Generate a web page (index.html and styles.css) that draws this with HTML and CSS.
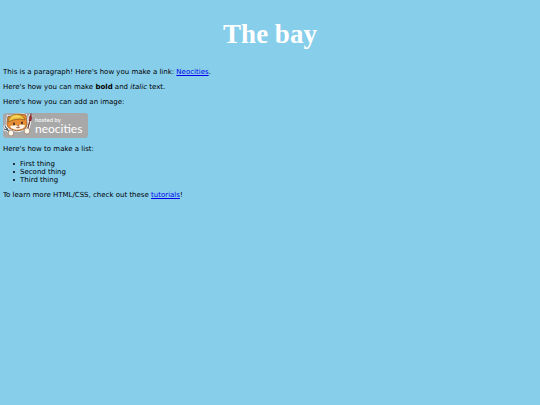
FILE: index.html
```html
<!DOCTYPE html>
<html lang="en">
<head>
<meta charset="utf-8">
<meta name="viewport" content="width=device-width, initial-scale=1">
<title>The bay</title>
<link rel="stylesheet" href="styles.css">
</head>
<body>
<h1>The bay</h1>
<p>This is a paragraph! Here's how you make a link: <a href="#">Neocities</a>.</p>
<p>Here's how you can make <strong>bold</strong> and <em>italic</em> text.</p>
<p>Here's how you can add an image:</p>
<svg class="badge" viewBox="0 0 85 25" role="img" aria-label="hosted by neocities">
  <rect width="85" height="25" rx="3" fill="#a8a8a8"/>
  <!-- fork and paintbrush -->
  <g fill="none" stroke-linecap="round">
    <path d="M2 13 L4 16 L8 22 M5 12 L5 16 M1 16 L4 17" stroke="#fff" stroke-width="2.6"/>
    <path d="M2 13 L4 16 L8 22 M5 12 L5 16 M1 16 L4 17" stroke="#545b62" stroke-width="1.3"/>
    <path d="M27.5 3 L26 10 L24 18" stroke="#fff" stroke-width="3.6"/>
    <path d="M26.5 9 L24 18" stroke="#65372d" stroke-width="1.3"/>
    <path d="M28 1 Q25.5 4 26 8 L28 8 Q29.5 5 28 1Z" fill="#a8242c" stroke="#592b2b" stroke-width=".6"/>
  </g>
  <!-- cat with a yellow helmet -->
  <path d="M4 9 L5 3 L8 4 Q12 0 18 1 L23 2 L24 9 Q25 15 19 17 Q13 19 8 16 Q3 14 4 9Z" fill="#e98d32" stroke="#fff" stroke-width="2"/>
  <path d="M4 9 L5 3 L8 4 Q12 0 18 1 L23 2 L24 9 Q25 15 19 17 Q13 19 8 16 Q3 14 4 9Z" fill="#e98d32" stroke="#754927" stroke-width=".7"/>
  <path d="M7 13 Q10 12 14 12.5 Q19 11 22 12 Q22 15 18 16 Q12 18 8 15Z" fill="#fff4e3"/>
  <path d="M5 9 Q6 2 13 1 Q20 1 22 7 L17 6 Q11 6 5 9Z" fill="#efc13c" stroke="#85551f" stroke-width=".7"/>
  <path d="M9 5 Q12 2 17 4" fill="none" stroke="#ffe88a" stroke-width=".8"/>
  <ellipse cx="11" cy="11" rx=".9" ry="1.4" fill="#352b2a"/>
  <ellipse cx="19" cy="10" rx=".9" ry="1.4" fill="#352b2a"/>
  <path d="M14.5 12.5 L16 12.5 L15.2 13.5Z M13 14.5 Q15 15.5 17 14" fill="#b06043" stroke="#82472e" stroke-width=".6"/>
  <ellipse cx="8" cy="20" rx="2.8" ry="3" fill="#fff7e8" stroke="#8c705c" stroke-width=".7"/>
  <ellipse cx="24" cy="18" rx="2.9" ry="3.1" fill="#fff7e8" stroke="#8c705c" stroke-width=".7"/>
  <text class="badge-hosted" x="32" y="9">hosted by</text>
  <text class="badge-name" x="32" y="20">neocities</text>
</svg>
<p>Here's how to make a list:</p>
<ul>
<li>First thing</li>
<li>Second thing</li>
<li>Third thing</li>
</ul>
<p>To learn more HTML/CSS, check out these <a href="#">tutorials</a>!</p>
</body>
</html>
```

FILE: styles.css
```css
body {
  margin: 3px;
  background: #87ceeb;
  color: #000;
  font: 7px/8px "DejaVu Sans", sans-serif;
}
h1 {
  margin: 16px 0 19px;
  color: #fff;
  font: bold 27px/30px "Liberation Serif", serif;
  text-align: center;
}
p { margin: 7px 0; }
ul { margin: 7px 0; padding-left: 10px; list-style: none; }
li { display: flex; align-items: center; gap: 5px; }
li::before { content: ""; width: 2px; height: 2px; border-radius: 50%; background: #000; }
a { color: #00e; }
.badge { display: block; width: 85px; height: 25px; margin: 6px 0 7px; }
.badge text { fill: #fff; font-family: Lato, sans-serif; }
.badge-hosted { font-size: 6px; }
.badge-name { font-size: 12px; }
```
